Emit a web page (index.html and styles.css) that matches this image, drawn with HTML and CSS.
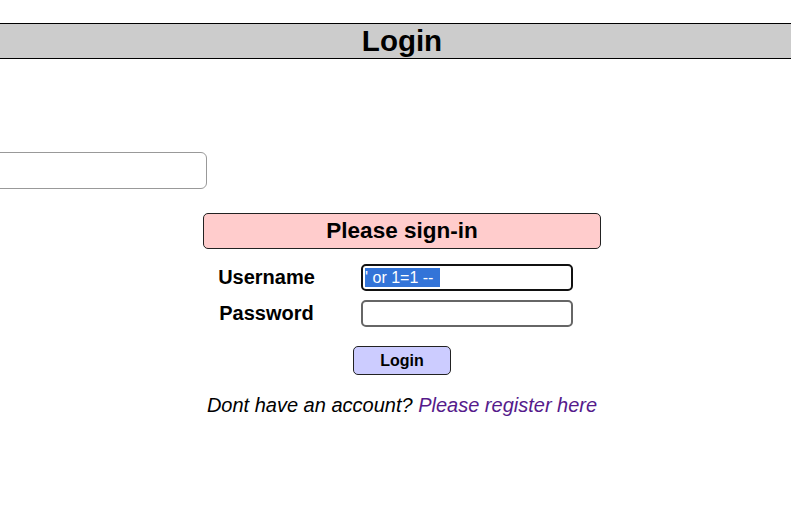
FILE: index.html
```html
<!DOCTYPE html>
<html>
<head>
<meta charset="utf-8">
<link rel="stylesheet" href="styles.css">
</head>
<body>
<header class="topbar"><h1 class="title">Login</h1></header>
<div class="search-row"><input class="search" type="text"></div>
<main class="panel">
  <div class="signin">Please sign-in</div>
  <div class="fields">
    <label class="lbl">Username</label>
    <div class="field focused"><span class="sel">' or 1=1 --</span></div>
    <label class="lbl">Password</label>
    <div class="field"></div>
  </div>
  <button class="btn">Login</button>
  <p class="note">Dont have an account? <a class="reg" href="#">Please register here</a></p>
</main>
</body>
</html>
```
FILE: styles.css
```css
html, body { margin: 0; padding: 0; background: #fff; }
body { font-family: "Liberation Sans", Arial, sans-serif; color: #000; }
.topbar {
  margin-top: 23px;
  height: 34px;
  background: #ccc;
  border-top: 1px solid #000;
  border-bottom: 1px solid #000;
  display: flex;
  justify-content: center;
  align-items: center;
  padding-left: 13px;
}
.title { margin: 0; font-size: 29.5px; font-weight: bold; line-height: 34px; }
.search-row { margin-top: 93px; height: 37px; }
.search {
  box-sizing: border-box;
  margin-left: -40px;
  width: 247px;
  height: 37px;
  border: 1px solid #999;
  border-radius: 6px;
  background: #fff;
}
.panel {
  margin-top: 24px;
  margin-left: 203px;
  width: 398px;
  display: flex;
  flex-direction: column;
  align-items: center;
}
.signin {
  box-sizing: border-box;
  width: 398px;
  height: 36px;
  background: #fcc;
  border: 1px solid #222;
  border-radius: 5px;
  font-size: 22.5px;
  font-weight: bold;
  text-align: center;
  line-height: 33px;
}
.fields {
  align-self: flex-start;
  margin-top: 15px;
  display: grid;
  grid-template-columns: 127px 212px;
  column-gap: 31px;
  row-gap: 9px;
  align-items: center;
}
.lbl { font-size: 20px; font-weight: bold; text-align: center; }
.field {
  box-sizing: border-box;
  height: 27px;
  border: 2px solid #666;
  border-radius: 5px;
  display: flex;
  align-items: center;
  padding-left: 2px;
}
.field.focused { border-color: #111; }
.sel {
  background: #3374d8;
  color: #fff;
  font-size: 16px;
  line-height: 19px;
  padding: 0 1px 0 0;
  width: 74px;
}
.btn {
  margin-top: 19px;
  box-sizing: border-box;
  width: 98px;
  height: 29px;
  background: #ccf;
  border: 1px solid #222;
  border-radius: 5px;
  font-family: "Liberation Sans", Arial, sans-serif;
  font-size: 16px;
  font-weight: bold;
  color: #000;
  padding: 0;
}
.note {
  margin: 19px 0 0;
  font-size: 20px;
  font-style: italic;
  text-align: center;
  white-space: nowrap;
}
.reg { color: #551a8b; text-decoration: none; }
```
